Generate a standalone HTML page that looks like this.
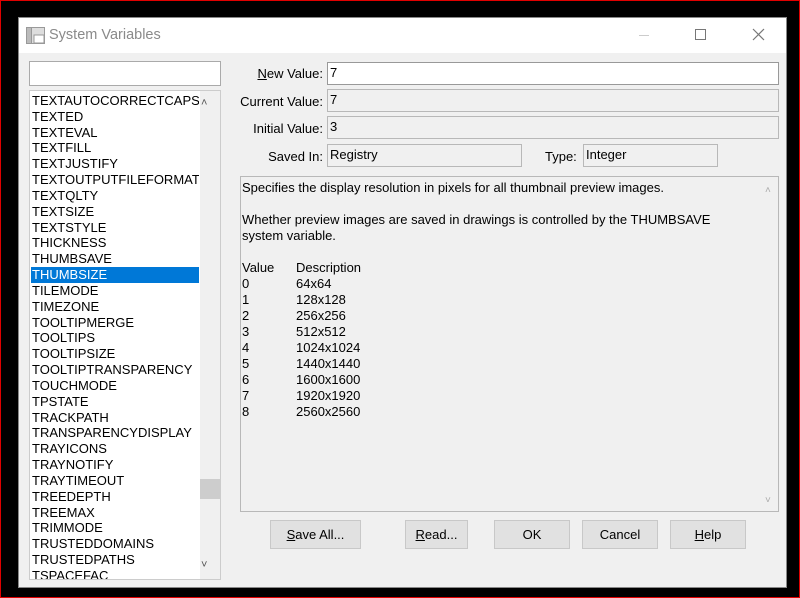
<!DOCTYPE html>
<html><head><style>
*{box-sizing:border-box;margin:0;padding:0}
body{width:800px;height:598px;background:#000;position:relative;overflow:hidden;font-family:"Liberation Sans",Arial,sans-serif;font-size:12.5px;color:#000}
.frame{position:absolute;left:0;top:0;width:800px;height:598px;border:1px solid #e00000}
.win{position:absolute;left:18px;top:17px;width:769px;height:571px;background:#f0f0f0;border:1px solid #888}
.title{position:absolute;left:0;top:0;width:100%;height:35px;background:#fff}
.title span{position:absolute;left:30px;top:9px;font-size:14.5px;color:#8a8a8a}
.abs{position:absolute}
.box{position:absolute;border:1px solid #b8b8b8;background:#f0f0f0;padding:2px 2px;font-size:13px}
.lbl{position:absolute;width:120px;text-align:right;font-size:13px}
.list{position:absolute;left:10px;top:72px;width:192px;height:490px;background:#fff;border:1px solid #ccc;overflow:hidden}
.item{position:absolute;left:1px;height:16px;line-height:16px;padding-left:1px;font-size:13px;white-space:nowrap;width:168px;overflow:hidden}
.sel{background:#0078d7;color:#fff}
.btn{position:absolute;top:502px;height:29px;background:#e1e1e1;border:1px solid #c8c8c8;text-align:center;line-height:27px;font-size:13px}
.desc{position:absolute;left:221px;top:158px;width:539px;height:336px;border:1px solid #b8b8b8;font-size:13px;line-height:16px;padding:3px 1px}
</style></head><body>
<div class="frame"></div>
<div class="win">
<div class="title">
<svg class="abs" style="left:7px;top:9px" width="20" height="18"><rect x="0.5" y="0.5" width="18" height="16" fill="#ddd" stroke="#999"/><rect x="0.5" y="0.5" width="5" height="16" fill="#bbb" stroke="#999"/><rect x="8" y="8" width="10" height="8" fill="#fff" stroke="#999"/></svg>
<span>System Variables</span>
<div class="abs" style="left:620px;top:17px;width:10px;height:1px;background:#ccc"></div>
<div class="abs" style="left:676px;top:11px;width:11px;height:11px;border:1px solid #777"></div>
<svg class="abs" style="left:733px;top:10px" width="13" height="13"><path d="M1 1L12 12M12 1L1 12" stroke="#777" stroke-width="1.2"/></svg>
</div>
<div class="abs" style="left:10px;top:43px;width:192px;height:25px;background:#fff;border:1px solid #aaa"></div>
<div class="list">
<div class="abs" style="left:170px;top:0;width:20px;height:490px;background:#f0f0f0"></div>
<div class="abs" style="left:171px;top:6px;font-size:11px;color:#555">&#708;</div>
<div class="abs" style="left:171px;top:468px;font-size:11px;color:#555">&#709;</div>
<div class="abs" style="left:170px;top:388px;width:20px;height:20px;background:#cdcdcd"></div>
<div class="item" style="top:2px">TEXTAUTOCORRECTCAPS</div>
<div class="item" style="top:18px">TEXTED</div>
<div class="item" style="top:34px">TEXTEVAL</div>
<div class="item" style="top:49px">TEXTFILL</div>
<div class="item" style="top:65px">TEXTJUSTIFY</div>
<div class="item" style="top:81px">TEXTOUTPUTFILEFORMAT</div>
<div class="item" style="top:97px">TEXTQLTY</div>
<div class="item" style="top:113px">TEXTSIZE</div>
<div class="item" style="top:129px">TEXTSTYLE</div>
<div class="item" style="top:144px">THICKNESS</div>
<div class="item" style="top:160px">THUMBSAVE</div>
<div class="item sel" style="top:176px">THUMBSIZE</div>
<div class="item" style="top:192px">TILEMODE</div>
<div class="item" style="top:208px">TIMEZONE</div>
<div class="item" style="top:224px">TOOLTIPMERGE</div>
<div class="item" style="top:239px">TOOLTIPS</div>
<div class="item" style="top:255px">TOOLTIPSIZE</div>
<div class="item" style="top:271px">TOOLTIPTRANSPARENCY</div>
<div class="item" style="top:287px">TOUCHMODE</div>
<div class="item" style="top:303px">TPSTATE</div>
<div class="item" style="top:319px">TRACKPATH</div>
<div class="item" style="top:334px">TRANSPARENCYDISPLAY</div>
<div class="item" style="top:350px">TRAYICONS</div>
<div class="item" style="top:366px">TRAYNOTIFY</div>
<div class="item" style="top:382px">TRAYTIMEOUT</div>
<div class="item" style="top:398px">TREEDEPTH</div>
<div class="item" style="top:414px">TREEMAX</div>
<div class="item" style="top:429px">TRIMMODE</div>
<div class="item" style="top:445px">TRUSTEDDOMAINS</div>
<div class="item" style="top:461px">TRUSTEDPATHS</div>
<div class="item" style="top:477px">TSPACEFAC</div>
</div>
<div class="lbl" style="left:184px;top:48px"><u>N</u>ew Value:</div>
<div class="lbl" style="left:184px;top:76px">Current Value:</div>
<div class="lbl" style="left:184px;top:103px">Initial Value:</div>
<div class="lbl" style="left:184px;top:131px">Saved In:</div>
<div class="box" style="left:308px;top:44px;width:452px;height:23px;background:#fff;border-color:#999">7</div>
<div class="box" style="left:308px;top:71px;width:452px;height:23px">7</div>
<div class="box" style="left:308px;top:98px;width:452px;height:23px">3</div>
<div class="box" style="left:308px;top:126px;width:195px;height:23px">Registry</div>
<div class="abs" style="left:526px;top:131px;font-size:13px">Type:</div>
<div class="box" style="left:564px;top:126px;width:135px;height:23px">Integer</div>
<div class="desc">
Specifies the display resolution in pixels for all thumbnail preview images.<br><br>
Whether preview images are saved in drawings is controlled by the THUMBSAVE<br>system variable.<br><br>
<div style="position:relative;height:160px">
<div class="abs" style="left:0;top:0">Value<br>0<br>1<br>2<br>3<br>4<br>5<br>6<br>7<br>8</div>
<div class="abs" style="left:54px;top:0">Description<br>64x64<br>128x128<br>256x256<br>512x512<br>1024x1024<br>1440x1440<br>1600x1600<br>1920x1920<br>2560x2560</div>
</div>
<div class="abs" style="left:524px;top:6px;font-size:10px;color:#aaa">&#708;</div>
<div class="abs" style="left:524px;top:316px;font-size:10px;color:#aaa">&#709;</div>
</div>
<div class="btn" style="left:251px;width:91px"><u>S</u>ave All...</div>
<div class="btn" style="left:386px;width:63px"><u>R</u>ead...</div>
<div class="btn" style="left:475px;width:76px">OK</div>
<div class="btn" style="left:563px;width:76px">Cancel</div>
<div class="btn" style="left:651px;width:76px"><u>H</u>elp</div>
</div>
</body></html>
